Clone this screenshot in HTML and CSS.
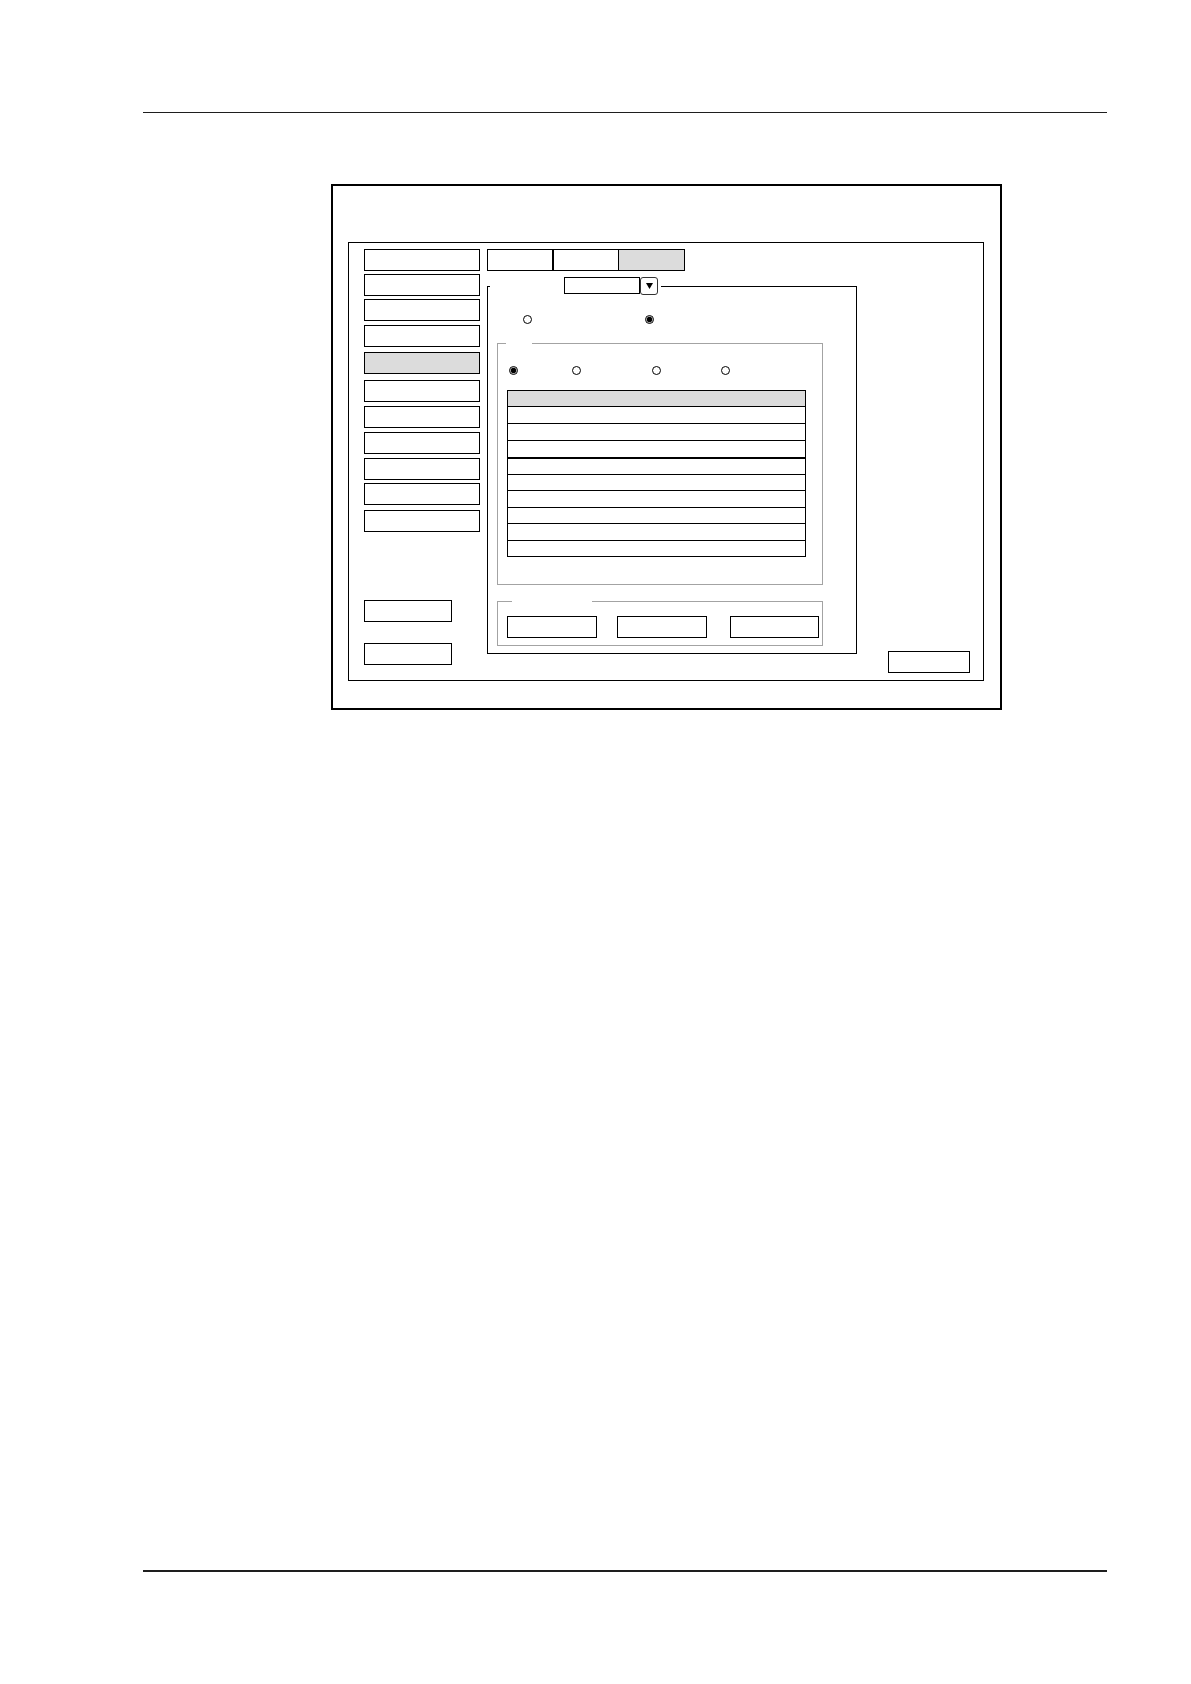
FILE: index.html
```html
<!DOCTYPE html>
<html lang="en">
<head>
<meta charset="utf-8">
<title>Settings dialog</title>
<link rel="stylesheet" href="styles.css">
</head>
<body>
<div class="page">
  <div class="rule rule-top"></div>
  <div class="figure">
    <div class="window">
      <div class="nav">
        <div class="nav-item"></div>
        <div class="nav-item"></div>
        <div class="nav-item"></div>
        <div class="nav-item"></div>
        <div class="nav-item active"></div>
        <div class="nav-item"></div>
        <div class="nav-item"></div>
        <div class="nav-item"></div>
        <div class="nav-item"></div>
        <div class="nav-item"></div>
        <div class="nav-item"></div>
        <div class="side-btn side-btn-first"></div>
        <div class="side-btn side-btn-second"></div>
      </div>
      <div class="main">
        <div class="tabs">
          <div class="tab tab-1"></div>
          <div class="tab tab-2"></div>
          <div class="tab tab-3"></div>
        </div>
        <fieldset class="group">
          <legend class="group-legend">
            <span class="legend-label"></span>
            <span class="select"></span>
            <span class="select-btn"><svg width="7" height="6" viewBox="0 0 7 6"><polygon points="0,0 7,0 3.5,6" fill="#000"/></svg></span>
          </legend>
          <div class="group-body">
            <div class="top-radios">
              <span class="radio"></span>
              <span class="radio on"></span>
            </div>
            <fieldset class="subgroup list-group">
              <legend class="sub-legend list-legend"></legend>
              <div class="list-radios">
                <span class="radio on"></span>
                <span class="radio"></span>
                <span class="radio"></span>
                <span class="radio"></span>
              </div>
              <div class="grid">
                <div class="grid-head"></div>
                <div class="grid-row"></div>
                <div class="grid-row"></div>
                <div class="grid-row"></div>
                <div class="grid-row"></div>
                <div class="grid-row"></div>
                <div class="grid-row"></div>
                <div class="grid-row"></div>
                <div class="grid-row"></div>
                <div class="grid-row"></div>
              </div>
            </fieldset>
            <fieldset class="subgroup action-group">
              <legend class="sub-legend action-legend"></legend>
              <div class="actions">
                <div class="btn btn-a"></div>
                <div class="btn btn-b"></div>
                <div class="btn btn-c"></div>
              </div>
            </fieldset>
          </div>
        </fieldset>
      </div>
      <div class="aside">
        <div class="btn ok"></div>
      </div>
    </div>
  </div>
  <div class="rule rule-bottom"></div>
</div>
</body>
</html>
```

FILE: styles.css
```css
html, body {
  margin: 0;
  padding: 0;
  background: #fff;
  font-family: "Liberation Sans", Arial, sans-serif;
}

.page {
  width: 1191px;
  height: 1684px;
  padding-top: 112px;
  box-sizing: border-box;
}

.rule {
  margin-left: 143px;
  width: 964px;
  background: #1e1e1e;
}

.rule-top {
  height: 1px;
}

.rule-bottom {
  height: 2px;
  margin-top: 860px;
}

.figure {
  margin: 71px 0 0 331px;
  width: 671px;
  height: 526px;
  box-sizing: border-box;
  border: 2px solid #000;
  padding: 56px 15px 0 15px;
}

.window {
  width: 636px;
  height: 439px;
  box-sizing: border-box;
  border: 1px solid #000;
  display: flex;
  padding: 6px 13px 7px 15px;
}

/* left navigation */
.nav {
  width: 116px;
  flex: none;
  display: flex;
  flex-direction: column;
}

.nav-item {
  height: 22px;
  box-sizing: border-box;
  border: 1px solid #000;
  margin-top: 4px;
  background: #fff;
}

.nav-item:nth-child(1) { margin-top: 0; }
.nav-item:nth-child(2),
.nav-item:nth-child(3),
.nav-item:nth-child(10) { margin-top: 3px; }
.nav-item:nth-child(5),
.nav-item:nth-child(11) { margin-top: 5px; }
.nav-item:nth-child(6) { margin-top: 6px; }

.nav-item.active {
  background: #dcdcdc;
}

.side-btn {
  width: 88px;
  height: 22px;
  box-sizing: border-box;
  border: 1px solid #000;
}

.side-btn-first { margin-top: 68px; }
.side-btn-second { margin-top: 21px; }

/* main column */
.main {
  margin-left: 7px;
  width: 370px;
  flex: none;
}

.tabs {
  display: flex;
  height: 22px;
}

.tab {
  height: 22px;
  box-sizing: border-box;
  border-top: 1px solid #000;
  border-bottom: 1px solid #000;
  border-right: 1px solid #000;
}

.tab-1 {
  width: 67px;
  border-left: 1px solid #000;
  border-right-width: 2px;
}

.tab-2 { width: 65px; }

.tab-3 {
  width: 66px;
  background: #dcdcdc;
}

.group {
  margin: 6px 0 0 0;
  padding: 0 0 7px 2px;
  border: 1px solid #000;
  width: 370px;
  min-width: 0;
  box-sizing: border-box;
}

.group-legend {
  padding: 0 3px 0 0;
  margin: 0;
  height: 18px;
  display: flex;
  align-items: flex-start;
}

.legend-label {
  width: 74px;
  height: 18px;
}

.select {
  width: 76px;
  height: 17px;
  box-sizing: border-box;
  border: 1px solid #000;
  background: #fff;
}

.select-btn {
  width: 18px;
  height: 18px;
  box-sizing: border-box;
  border: 1px solid #333;
  border-radius: 3px;
  display: flex;
  align-items: center;
  justify-content: center;
}

.select-btn svg {
  display: block;
}

.group-body {
  padding-left: 7px;
}

.top-radios {
  display: flex;
  margin-top: 20px;
  padding-left: 26px;
}

.top-radios .radio + .radio {
  margin-left: 113px;
}

.radio {
  width: 9px;
  height: 9px;
  flex: none;
  box-sizing: border-box;
  border: 1px solid #000;
  border-radius: 50%;
  background: #fff;
}

.radio.on {
  background: radial-gradient(circle, #000 0 2.2px, #777 2.8px, #fff 3.4px);
}

.subgroup {
  margin: 0;
  padding: 0;
  border: 1px solid #a3a3a3;
  width: 326px;
  min-width: 0;
  box-sizing: border-box;
}

.sub-legend {
  padding: 0;
  height: 1px;
}

.list-group {
  margin-top: 19px;
  padding-bottom: 27px;
}

.list-legend {
  margin-left: 8px;
  width: 26px;
}

.list-radios {
  display: flex;
  margin-top: 22px;
  padding-left: 11px;
}

.list-radios .radio:nth-child(2) { margin-left: 54px; }
.list-radios .radio:nth-child(3) { margin-left: 71px; }
.list-radios .radio:nth-child(4) { margin-left: 60px; }

.grid {
  margin: 15px 0 0 9px;
  width: 299px;
  box-sizing: border-box;
  border: 1px solid #000;
}

.grid-head {
  height: 15px;
  background: #dcdcdc;
  border-bottom: 1px solid #000;
}

.grid-row {
  height: 16px;
  border-bottom: 1px solid #000;
}

.grid-row:nth-child(4) { border-bottom-width: 2px; }
.grid-row:nth-child(5),
.grid-row:nth-child(6),
.grid-row:nth-child(8),
.grid-row:nth-child(10) { height: 15px; }
.grid-row:last-child { border-bottom: none; }

.action-group {
  margin-top: 16px;
  padding-bottom: 7px;
}

.action-legend {
  margin-left: 14px;
  width: 80px;
}

.actions {
  display: flex;
  margin: 14px 0 0 9px;
}

.btn {
  height: 22px;
  box-sizing: border-box;
  border: 1px solid #000;
  background: #fff;
}

.btn-a { width: 90px; }
.btn-b { width: 90px; margin-left: 20px; }
.btn-c { width: 89px; margin-left: 23px; }

.aside {
  flex: 1;
  display: flex;
  justify-content: flex-end;
  align-items: flex-end;
}

.ok {
  width: 82px;
}
```
